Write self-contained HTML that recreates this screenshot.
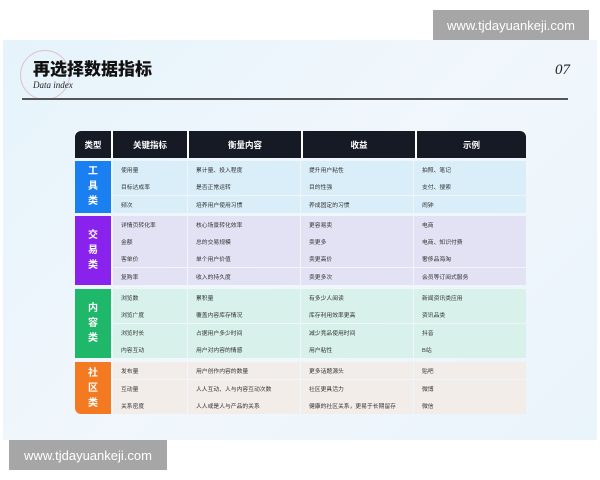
<!DOCTYPE html>
<html><head><meta charset="utf-8"><style>
*{margin:0;padding:0;box-sizing:border-box}
body{width:600px;height:480px;background:#fff;position:relative;overflow:hidden;font-family:"Liberation Sans","Noto Sans CJK SC",sans-serif}
.slide{position:absolute;left:3px;top:40px;width:594px;height:400px;background:linear-gradient(135deg,#e6f3fb 0%,#f1f7fc 50%,#eaf4fb 100%)}
.wm{position:absolute;background:#a6a6a6;color:#fff;font-size:13px;display:flex;align-items:center;justify-content:center}
.title{position:absolute;left:33px;top:55px;font-size:17px;font-weight:900;color:#111}
.sub{position:absolute;left:33px;top:80px;font-size:9px;font-style:italic;font-family:"Liberation Serif",serif;color:#222}
.num{position:absolute;left:555px;top:62px;font-size:15px;font-style:italic;color:#222;font-family:"Liberation Serif",serif}
.line{position:absolute;left:22px;top:98px;width:546px;height:1.5px;background:#555}
.circ{position:absolute;left:20px;top:50px;width:50px;height:50px;border:1px solid #d8a0a8;border-radius:50%;opacity:.6}
.tbl{position:absolute;left:75px;top:131px;width:451px}
.hdr{display:flex;height:27px;gap:2px;background:#fff}
.hdr div{background:#161a24;color:#fff;font-size:8.5px;font-weight:bold;display:flex;align-items:center;justify-content:center}
.hdr div:first-child{border-radius:6px 0 0 0}.hdr div:last-child{border-radius:0 6px 0 0}
.grp{display:flex;margin-top:3px}
.lab{width:36px;color:#fff;font-size:10px;font-weight:bold;display:flex;align-items:center;justify-content:center;text-align:center;line-height:15px;margin-right:2px}
.rows{flex:1}
.r{display:flex;height:17px;gap:1px;margin-bottom:0.3px}
.r div{font-size:5.8px;color:#333;display:flex;align-items:center;padding-left:8px}
.c1{width:74px}.c2{width:112px}.c3{width:112px}.c4{flex:1}
</style></head><body>
<div class="wm" style="left:433px;top:10px;width:156px;height:30px">www.tjdayuankeji.com</div>
<div class="slide"></div>
<div class="circ"></div>
<div class="title">再选择数据指标</div>
<div class="sub">Data index</div>
<div class="num">07</div>
<div class="line"></div>
<div class="tbl">
<div class="hdr"><div style="width:36px">类型</div><div style="width:74px">关键指标</div><div style="width:112px">衡量内容</div><div style="width:112px">收益</div><div style="flex:1">示例</div></div>
<div class="grp" style="margin-top:3px"><div class="lab" style="background:#1a7ff0">工<br>具<br>类</div><div class="rows">
<div class="r"><div class="c1" style="background:#d9eef9">使用量</div><div class="c2" style="background:#d9eef9">累计量、投入程度</div><div class="c3" style="background:#d9eef9">提升用户粘性</div><div class="c4" style="background:#d9eef9">拍照、笔记</div></div>
<div class="r"><div class="c1" style="background:#d9eef9">目标达成率</div><div class="c2" style="background:#d9eef9">是否正常运转</div><div class="c3" style="background:#d9eef9">目的性强</div><div class="c4" style="background:#d9eef9">支付、搜索</div></div>
<div class="r"><div class="c1" style="background:#d9eef9">频次</div><div class="c2" style="background:#d9eef9">培养用户使用习惯</div><div class="c3" style="background:#d9eef9">养成固定的习惯</div><div class="c4" style="background:#d9eef9">闹钟</div></div>
</div></div>
<div class="grp"><div class="lab" style="background:#8a22ee">交<br>易<br>类</div><div class="rows">
<div class="r"><div class="c1" style="background:#e3e2f5">详情页转化率</div><div class="c2" style="background:#e3e2f5">核心场景转化效率</div><div class="c3" style="background:#e3e2f5">更容易卖</div><div class="c4" style="background:#e3e2f5">电商</div></div>
<div class="r"><div class="c1" style="background:#e3e2f5">金额</div><div class="c2" style="background:#e3e2f5">总的交易规模</div><div class="c3" style="background:#e3e2f5">卖更多</div><div class="c4" style="background:#e3e2f5">电商、知识付费</div></div>
<div class="r"><div class="c1" style="background:#e3e2f5">客单价</div><div class="c2" style="background:#e3e2f5">单个用户价值</div><div class="c3" style="background:#e3e2f5">卖更高价</div><div class="c4" style="background:#e3e2f5">奢侈品海淘</div></div>
<div class="r"><div class="c1" style="background:#e3e2f5">复购率</div><div class="c2" style="background:#e3e2f5">收入的持久度</div><div class="c3" style="background:#e3e2f5">卖更多次</div><div class="c4" style="background:#e3e2f5">会员等订阅式服务</div></div>
</div></div>
<div class="grp" style="margin-top:4px"><div class="lab" style="background:#1fb86a">内<br>容<br>类</div><div class="rows">
<div class="r"><div class="c1" style="background:#d8f1ea">浏览数</div><div class="c2" style="background:#d8f1ea">累积量</div><div class="c3" style="background:#d8f1ea">有多少人阅读</div><div class="c4" style="background:#d8f1ea">新闻资讯类应用</div></div>
<div class="r"><div class="c1" style="background:#d8f1ea">浏览广度</div><div class="c2" style="background:#d8f1ea">覆盖内容库存情况</div><div class="c3" style="background:#d8f1ea">库存利用效率更高</div><div class="c4" style="background:#d8f1ea">资讯品类</div></div>
<div class="r"><div class="c1" style="background:#d8f1ea">浏览时长</div><div class="c2" style="background:#d8f1ea">占据用户多少时间</div><div class="c3" style="background:#d8f1ea">减少竞品使用时间</div><div class="c4" style="background:#d8f1ea">抖音</div></div>
<div class="r"><div class="c1" style="background:#d8f1ea">内容互动</div><div class="c2" style="background:#d8f1ea">用户对内容的情感</div><div class="c3" style="background:#d8f1ea">用户粘性</div><div class="c4" style="background:#d8f1ea">B站</div></div>
</div></div>
<div class="grp" style="margin-top:4px"><div class="lab" style="background:#f47a22;border-radius:0 0 0 6px">社<br>区<br>类</div><div class="rows">
<div class="r"><div class="c1" style="background:#f3ede9">发布量</div><div class="c2" style="background:#f3ede9">用户创作内容的数量</div><div class="c3" style="background:#f3ede9">更多话题源头</div><div class="c4" style="background:#f3ede9">贴吧</div></div>
<div class="r"><div class="c1" style="background:#f3ede9">互动量</div><div class="c2" style="background:#f3ede9">人人互动、人与内容互动次数</div><div class="c3" style="background:#f3ede9">社区更具活力</div><div class="c4" style="background:#f3ede9">微博</div></div>
<div class="r"><div class="c1" style="background:#f3ede9">关系密度</div><div class="c2" style="background:#f3ede9">人人或是人与产品的关系</div><div class="c3" style="background:#f3ede9">健康的社区关系，更易于长期留存</div><div class="c4" style="background:#f3ede9">微信</div></div>
</div></div>
</div>
<div class="wm" style="left:9px;top:440px;width:158px;height:30px">www.tjdayuankeji.com</div>
</body></html>
